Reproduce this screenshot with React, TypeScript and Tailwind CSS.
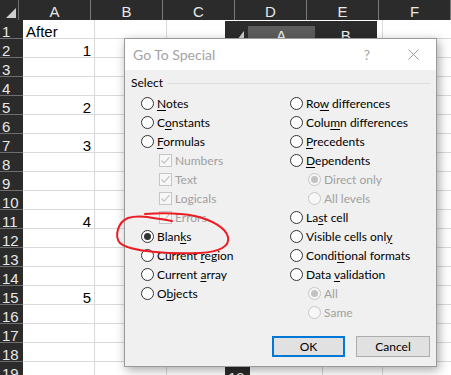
import React from "react";

const COLS = ["A", "B", "C", "D", "E", "F"];
const VALUES: Record<number, string> = { 2: "1", 5: "2", 7: "3", 11: "4", 15: "5" };

type Item = { label: string; kind: "radio" | "check"; sub?: boolean; checked?: boolean; disabled?: boolean };

const LEFT: Item[] = [
  { label: "&Notes", kind: "radio" },
  { label: "C&onstants", kind: "radio" },
  { label: "&Formulas", kind: "radio" },
  { label: "Numbers", kind: "check", sub: true, checked: true, disabled: true },
  { label: "Text", kind: "check", sub: true, checked: true, disabled: true },
  { label: "Logicals", kind: "check", sub: true, checked: true, disabled: true },
  { label: "Errors", kind: "check", sub: true, checked: true, disabled: true },
  { label: "Blan&ks", kind: "radio", checked: true },
  { label: "Current &region", kind: "radio" },
  { label: "Current &array", kind: "radio" },
  { label: "O&bjects", kind: "radio" },
];

const RIGHT: Item[] = [
  { label: "Ro&w differences", kind: "radio" },
  { label: "Colu&mn differences", kind: "radio" },
  { label: "&Precedents", kind: "radio" },
  { label: "&Dependents", kind: "radio" },
  { label: "Direct only", kind: "radio", sub: true, checked: true, disabled: true },
  { label: "All levels", kind: "radio", sub: true, disabled: true },
  { label: "La&st cell", kind: "radio" },
  { label: "Visible cells onl&y", kind: "radio" },
  { label: "Condi&tional formats", kind: "radio" },
  { label: "Data &validation", kind: "radio" },
  { label: "All", kind: "radio", sub: true, checked: true, disabled: true },
  { label: "Same", kind: "radio", sub: true, disabled: true },
];

// "&" marks the access key letter, like a Windows resource string
function Label({ text }: { text: string }) {
  const i = text.indexOf("&");
  if (i < 0) return <span>{text}</span>;
  return (
    <span>
      {text.slice(0, i)}
      <span className="underline underline-offset-2">{text[i + 1]}</span>
      {text.slice(i + 2)}
    </span>
  );
}

function Radio({ checked, disabled }: { checked?: boolean; disabled?: boolean }) {
  return (
    <span
      className={`flex h-[13px] w-[13px] shrink-0 items-center justify-center rounded-full border ${
        disabled ? "border-[#c6c6c6] bg-[#f7f7f7]" : "border-[#333333] bg-white"
      }`}
    >
      {checked && (
        <span className={`h-[7px] w-[7px] rounded-full ${disabled ? "bg-[#c2c2c2]" : "bg-[#333333]"}`} />
      )}
    </span>
  );
}

function Check({ checked }: { checked?: boolean }) {
  return (
    <span className="flex h-[13px] w-[13px] shrink-0 items-center justify-center border border-[#c6c6c6] bg-[#f7f7f7]">
      {checked && (
        <svg width="11" height="11" viewBox="0 0 11 11" fill="none">
          <path d="M1.5 5.5 L4.2 8.2 L9.5 2.2" stroke="#c2c2c2" strokeWidth="1.2" />
        </svg>
      )}
    </span>
  );
}

function Option({ item }: { item: Item }) {
  return (
    <div className={`flex h-[19px] items-center gap-[3px] ${item.sub ? "pl-[18px]" : ""}`}>
      {item.kind === "radio" ? <Radio checked={item.checked} disabled={item.disabled} /> : <Check checked={item.checked} />}
      <span className={item.disabled ? "text-[#a0a0a0]" : "text-black"}>
        <Label text={item.label} />
      </span>
    </div>
  );
}

function Sheet() {
  const rows = Array.from({ length: 19 }, (_, i) => i + 1);
  return (
    <div className="flex flex-col">
      <div className="flex h-[20px] bg-[#2b2b2b]">
        <div className="relative w-[23px] border-r border-[#6e6e6e]">
          <svg className="absolute bottom-[2px] right-[2px]" width="10" height="10" viewBox="0 0 10 10">
            <path d="M10 0 L10 10 L0 10 Z" fill="#d0d0d0" />
          </svg>
        </div>
        {COLS.map((c) => (
          <div
            key={c}
            className="w-[72px] shrink-0 border-r border-[#7a7a7a] pt-[1px] text-center text-[15px] leading-[21px] text-[#e8e8e8]"
          >
            {c}
          </div>
        ))}
      </div>
      {rows.map((r) => (
        <div key={r} className="flex h-[19px]">
          <div className="w-[23px] shrink-0 border-b border-[#6e6e6e] bg-[#2b2b2b] pl-[2px] pt-[2px] text-[15px] leading-[19px] text-[#e8e8e8]">
            {r}
          </div>
          {COLS.map((c) => (
            <div
              key={c}
              className={`w-[72px] shrink-0 border-r border-b border-[#dadada] px-[3px] pt-[2px] text-[15px] leading-[20px] text-black ${
                c === "A" && r > 1 ? "text-right" : ""
              }`}
            >
              {c === "A" ? (r === 1 ? "After" : VALUES[r] ?? "") : ""}
            </div>
          ))}
        </div>
      ))}
    </div>
  );
}

// pasted screenshot of another sheet, mostly hidden behind the dialog
function EmbeddedShot() {
  return (
    <div className="absolute left-[225px] top-[21px] h-[354px] w-[152px] overflow-hidden bg-white">
      <div className="flex h-[24px] bg-[#2b2b2b] pt-[5px]">
        <div className="relative w-[25px]">
          <svg className="absolute bottom-[5px] right-[4px]" width="7" height="9" viewBox="0 0 7 9">
            <path d="M7 0 L7 9 L0 9 Z" fill="#cfcfcf" />
          </svg>
        </div>
        <div className="w-[73px] bg-[#5d5d5d] text-center text-[15px] leading-[20px] text-[#f0f0f0]">A</div>
        <div className="w-[68px] text-center text-[15px] leading-[20px] text-[#f0f0f0]">B</div>
      </div>
      <div className="flex h-[330px]">
        <div className="flex w-[25px] flex-col justify-end bg-[#2b2b2b] pl-[3px] text-[15px] leading-[19px] text-[#f0f0f0]">
          <span className="-mb-[12px]">19</span>
        </div>
        <div className="w-[73px] border-r border-[#d4d4d4]" />
      </div>
    </div>
  );
}

function Dialog() {
  return (
    <div className="absolute left-[124px] top-[38px] flex h-[329px] w-[313px] flex-col border border-[#9a9a9a] bg-[#f0f0f0] font-['Lato',sans-serif] text-[12px] shadow-[2px_3px_10px_rgba(0,0,0,0.35)]">
      <div className="flex h-[31px] shrink-0 items-center bg-white">
        <span className="pl-[8px] text-[14px] text-[#a3a3a3]">Go To Special</span>
        <span className="ml-auto flex h-full w-[46px] items-center justify-center text-[14px] text-[#a3a3a3]">?</span>
        <span className="flex h-full w-[46px] items-center justify-center">
          <svg width="11" height="11" viewBox="0 0 11 11">
            <path d="M0.5 0.5 L10.5 10.5 M10.5 0.5 L0.5 10.5" stroke="#9a9a9a" strokeWidth="1" />
          </svg>
        </span>
      </div>
      <div className="flex flex-1 flex-col px-[6px] pt-[5px]">
        <div className="flex h-[16px] items-center">
          <span className="text-black">Select</span>
          <span className="ml-[5px] h-px flex-1 bg-[#dcdcdc]" />
        </div>
        <div className="ml-[10px] mt-[3px] grid grid-cols-[149px_1fr]">
          <div className="flex flex-col">
            {LEFT.map((it) => (
              <Option key={it.label} item={it} />
            ))}
          </div>
          <div className="flex flex-col">
            {RIGHT.map((it) => (
              <Option key={it.label} item={it} />
            ))}
          </div>
        </div>
        <div className="mt-[14px] flex justify-end gap-[11px]">
          <button className="h-[21px] w-[73px] border-2 border-[#0078d7] bg-[#e1e1e1] text-[12px] text-black">OK</button>
          <button className="h-[21px] w-[74px] border border-[#adadad] bg-[#e1e1e1] text-[12px] text-black">Cancel</button>
        </div>
      </div>
    </div>
  );
}

function Scribble() {
  return (
    <svg className="pointer-events-none absolute left-0 top-0" width="451" height="375" viewBox="0 0 451 375" fill="none">
      <path
        d="M172 221 C158 219 140 214 128 218 C118 222 114 236 120 243 C130 252 170 254 200 253 C220 252 230 246 228 237 C226 228 212 220 195 216 C180 213 160 213 145 214"
        stroke="#ec1c24"
        strokeWidth="2"
        strokeLinecap="round"
      />
    </svg>
  );
}

export default function App() {
  return (
    <div className="relative h-[375px] w-[451px] overflow-hidden bg-white font-['Liberation_Sans',Arial,sans-serif]">
      <Sheet />
      <EmbeddedShot />
      <Dialog />
      <Scribble />
    </div>
  );
}
